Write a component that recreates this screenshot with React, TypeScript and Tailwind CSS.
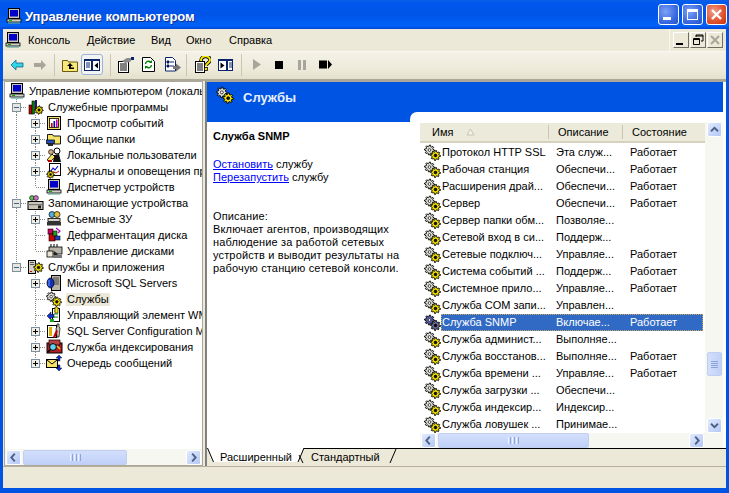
import React from "react";

const font = { fontFamily: '"Liberation Sans", Arial, sans-serif' };

function cogPoints(cx: number, cy: number, r: number, R: number, n: number) {
  const pts: string[] = [];
  for (let i = 0; i < n * 4; i++) {
    const a = (i / (n * 4)) * Math.PI * 2;
    const rad = i % 4 < 2 ? R : r;
    pts.push(`${(cx + Math.cos(a) * rad).toFixed(1)},${(cy + Math.sin(a) * rad).toFixed(1)}`);
  }
  return pts.join(" ");
}

function Cog({ cx, cy, R, fill, hole = "#fff" }: { cx: number; cy: number; R: number; fill: string; hole?: string }) {
  return (
    <g>
      <polygon points={cogPoints(cx, cy, R * 0.7, R, 8)} fill={fill} stroke="#000" strokeWidth="0.9" />
      <circle cx={cx} cy={cy} r={R * 0.28} fill={hole} stroke="#000" strokeWidth="0.7" />
    </g>
  );
}

function Gears({ selected = false, size = 17 }: { selected?: boolean; size?: number }) {
  return (
    <svg width={size} height={size} viewBox="0 0 17 17" className="shrink-0">
      <Cog cx={5.5} cy={6} R={5} fill={selected ? "#5a5fb0" : "#e4e2da"} />
      <Cog cx={11.5} cy={11.5} R={5} fill={selected ? "#6b6f9c" : "#f7e400"} hole="#111" />
    </svg>
  );
}

function Computer({ size = 16 }: { size?: number }) {
  return (
    <svg width={size} height={size} viewBox="0 0 16 16" className="shrink-0">
      <rect x="2.5" y="0.5" width="11" height="10" fill="#c8c4b8" stroke="#000" />
      <rect x="4" y="2" width="8" height="6.5" fill="#0000c8" />
      <rect x="1" y="11" width="14" height="3" fill="#d4d0c8" stroke="#000" strokeWidth="0.8" />
      <rect x="3" y="12" width="3" height="1" fill="#00b000" />
      <rect x="2" y="14.4" width="12" height="1.2" fill="#5fa89c" />
    </svg>
  );
}

type IconName =
  | "tools" | "event" | "folder" | "users" | "logs" | "device" | "storage" | "removable"
  | "defrag" | "disk" | "apps" | "sql" | "gears" | "wmi" | "sqlconf" | "index" | "queue";

function TreeIcon({ name }: { name: IconName }) {
  const c = "shrink-0";
  switch (name) {
    case "tools":
      return (
        <svg width="17" height="16" viewBox="0 0 17 16" className={c}>
          <rect x="2" y="6" width="3" height="9" fill="#c00000" stroke="#000" strokeWidth="0.6" />
          <rect x="5" y="2" width="2.5" height="13" fill="#008000" stroke="#000" strokeWidth="0.6" />
          <path d="M8 1l2 0 0 10-2 0z" fill="#1b1b6b" />
          <Cog cx={12} cy={11} R={4.2} fill="#f7e400" hole="#111" />
        </svg>
      );
    case "event":
      return (
        <svg width="16" height="16" viewBox="0 0 16 16" className={c}>
          <rect x="1.5" y="1.5" width="13" height="13" fill="#f4e070" stroke="#000" />
          <rect x="3.5" y="3.5" width="9" height="9" fill="#fff" stroke="#000" strokeWidth="0.8" />
          <rect x="5" y="8" width="1.6" height="4" fill="#d00000" />
          <rect x="7.5" y="6" width="1.6" height="6" fill="#0000c0" />
          <rect x="10" y="4.5" width="1.6" height="7.5" fill="#c000c0" />
        </svg>
      );
    case "folder":
      return (
        <svg width="16" height="16" viewBox="0 0 16 16" className={c}>
          <path d="M1.5 3.5h5l1 1.5h7v8h-13z" fill="#f6e46a" stroke="#000" strokeWidth="0.9" />
          <rect x="0.5" y="9" width="8" height="3.5" fill="#2050c0" stroke="#000" strokeWidth="0.7" />
          <rect x="2" y="12.5" width="5" height="2.5" fill="#2a2a2a" />
        </svg>
      );
    case "users":
      return (
        <svg width="16" height="16" viewBox="0 0 16 16" className={c}>
          <circle cx="11" cy="4" r="3" fill="#fff" stroke="#000" />
          <path d="M7 15l1-7 5-1 2 8z" fill="#111" />
          <path d="M1 13l5-6 3 3-5 5z" fill="#f6e46a" stroke="#000" strokeWidth="0.8" />
          <circle cx="5" cy="5" r="2.4" fill="#d8b080" stroke="#000" strokeWidth="0.7" />
          <rect x="2" y="13" width="4" height="2" fill="#c00000" />
        </svg>
      );
    case "logs":
      return (
        <svg width="16" height="16" viewBox="0 0 16 16" className={c}>
          <rect x="3.5" y="0.5" width="11" height="12" fill="#fff" stroke="#000" />
          <path d="M5 8l2-3 2 2 3-4" fill="none" stroke="#0000d0" strokeWidth="1.1" />
          <path d="M5 10l3-1 2 1 3-2" fill="none" stroke="#d00000" strokeWidth="1" />
          <Cog cx={4.5} cy={11.5} R={3.8} fill="#f7e400" hole="#111" />
        </svg>
      );
    case "device":
      return <Computer />;
    case "storage":
      return (
        <svg width="17" height="16" viewBox="0 0 17 16" className={c}>
          <circle cx="5" cy="3" r="2.4" fill="#60c060" stroke="#000" strokeWidth="0.6" />
          <circle cx="9" cy="3" r="2.4" fill="#d070c0" stroke="#000" strokeWidth="0.6" />
          <rect x="1" y="6.5" width="15" height="8" fill="#c8c4b8" stroke="#000" />
          <rect x="1" y="9" width="15" height="1.2" fill="#777" />
          <rect x="11" y="10.5" width="3" height="3" fill="#222" />
        </svg>
      );
    case "removable":
      return (
        <svg width="16" height="16" viewBox="0 0 16 16" className={c}>
          <circle cx="6" cy="3.5" r="3" fill="#50b0e0" stroke="#000" strokeWidth="0.7" />
          <circle cx="11" cy="3.5" r="3" fill="#e0c040" stroke="#000" strokeWidth="0.7" />
          <rect x="2" y="7.5" width="12" height="3" fill="#d4d0c8" stroke="#000" strokeWidth="0.8" />
          <rect x="1" y="11" width="14" height="3.5" fill="#333" />
        </svg>
      );
    case "defrag":
      return (
        <svg width="16" height="16" viewBox="0 0 16 16" className={c}>
          <rect x="2" y="2" width="5" height="5" fill="#d00060" stroke="#000" strokeWidth="0.6" />
          <rect x="3" y="7" width="6" height="7" fill="#d00000" stroke="#000" strokeWidth="0.6" />
          <rect x="7" y="4" width="4" height="5" fill="#20a020" stroke="#000" strokeWidth="0.6" />
          <path d="M10 1l4 3-2 2" fill="none" stroke="#b000c0" strokeWidth="1.2" />
          <rect x="9" y="9" width="5" height="4" fill="#2040c0" stroke="#000" strokeWidth="0.6" />
        </svg>
      );
    case "disk":
      return (
        <svg width="17" height="16" viewBox="0 0 17 16" className={c}>
          <rect x="3" y="4" width="13" height="7" fill="#b8b4a8" stroke="#000" strokeWidth="0.8" />
          <path d="M5 1v3M8 1v3M11 1v3" stroke="#000" />
          <rect x="1" y="8" width="6" height="6" fill="#e8e4d0" stroke="#000" strokeWidth="0.8" />
          <path d="M8 8l4 3-4 3z" fill="#222" />
          <rect x="7" y="12" width="9" height="3" fill="#777" />
        </svg>
      );
    case "apps":
      return (
        <svg width="17" height="16" viewBox="0 0 17 16" className={c}>
          <rect x="1.5" y="1.5" width="7" height="13" fill="#d4d0c8" stroke="#000" />
          <rect x="3" y="3" width="4" height="1" fill="#555" />
          <rect x="3" y="5" width="4" height="1" fill="#555" />
          <rect x="3" y="12" width="2" height="1" fill="#d00000" />
          <Cog cx={11.5} cy={8.5} R={4.8} fill="#f7e400" hole="#111" />
        </svg>
      );
    case "sql":
      return (
        <svg width="16" height="16" viewBox="0 0 16 16" className={c}>
          <rect x="5.5" y="0.5" width="9" height="15" fill="#b8b4a8" stroke="#000" />
          <path d="M7 3h6M7 5h6M7 7h6M7 9h6" stroke="#444" />
          <ellipse cx="4.5" cy="8" rx="3.5" ry="5" fill="#1030c0" stroke="#000" strokeWidth="0.7" />
          <path d="M3 5v6" stroke="#70a0ff" />
        </svg>
      );
    case "gears":
      return <Gears size={16} />;
    case "wmi":
      return (
        <svg width="16" height="16" viewBox="0 0 16 16" className={c}>
          <rect x="6.5" y="1.5" width="7" height="13" fill="#fff" stroke="#000" />
          <path d="M8 4h4M8 7h4M8 10h4" stroke="#008000" />
          <path d="M1 9l4-4 0 2.5 3 0 0 3-3 0 0 2.5z" fill="#1030d0" stroke="#000" strokeWidth="0.5" />
          <rect x="9" y="0" width="3" height="6" fill="#f7e400" stroke="#000" strokeWidth="0.5" />
          <rect x="4" y="12" width="4" height="3" fill="#20a020" />
        </svg>
      );
    case "sqlconf":
      return (
        <svg width="16" height="16" viewBox="0 0 16 16" className={c}>
          <rect x="1.5" y="2.5" width="9" height="12" fill="#fff" stroke="#000" />
          <rect x="3" y="4" width="3" height="9" fill="#e0b000" />
          <path d="M11 1l2 0 0 3 1 1-1 9-2 0-1-9 1-1z" fill="#c8c4b8" stroke="#000" strokeWidth="0.7" />
          <path d="M7 14l3-7 2 1-3 7z" fill="#c00000" />
        </svg>
      );
    case "index":
      return (
        <svg width="17" height="16" viewBox="0 0 17 16" className={c}>
          <rect x="1" y="4" width="15" height="10" fill="#b02020" stroke="#000" />
          <rect x="3" y="1" width="11" height="5" fill="#c04040" stroke="#000" strokeWidth="0.7" />
          <circle cx="7" cy="8" r="3.4" fill="#60d0f0" stroke="#000" />
          <path d="M4.5 10.5l-3 3" stroke="#000" strokeWidth="1.6" />
          <path d="M11 7l3 3" stroke="#f0d040" strokeWidth="1.4" />
        </svg>
      );
    case "queue":
      return (
        <svg width="17" height="16" viewBox="0 0 17 16" className={c}>
          <rect x="0.5" y="4.5" width="11" height="8" fill="#f6e46a" stroke="#000" />
          <path d="M1 5l5 4 5-4" fill="none" stroke="#000" />
          <path d="M13 0l3 3-2 0 0 3-2 0 0-3-2 0z" fill="#1030d0" stroke="#000" strokeWidth="0.4" />
          <path d="M13 16l3-3-2 0 0-3-2 0 0 3-2 0z" fill="#1030d0" stroke="#000" strokeWidth="0.4" />
        </svg>
      );
  }
}

function Guide({ v = false, vEnd = false, h = false }: { v?: boolean; vEnd?: boolean; h?: boolean }) {
  return (
    <svg width="19" height="16" viewBox="0 0 19 16" className="shrink-0">
      {v && <line x1="9.5" y1="0" x2="9.5" y2="16" stroke="#8a8a80" strokeDasharray="1 1" />}
      {vEnd && <line x1="9.5" y1="0" x2="9.5" y2="8" stroke="#8a8a80" strokeDasharray="1 1" />}
      {h && <line x1="10" y1="8.5" x2="19" y2="8.5" stroke="#8a8a80" strokeDasharray="1 1" />}
    </svg>
  );
}

function Expander({ open, v = true, top = true }: { open: boolean; v?: boolean; top?: boolean }) {
  return (
    <svg width="19" height="16" viewBox="0 0 19 16" className="shrink-0">
      {top && <line x1="9.5" y1="0" x2="9.5" y2="4" stroke="#8a8a80" strokeDasharray="1 1" />}
      {v && <line x1="9.5" y1="13" x2="9.5" y2="16" stroke="#8a8a80" strokeDasharray="1 1" />}
      <line x1="14" y1="8.5" x2="19" y2="8.5" stroke="#8a8a80" strokeDasharray="1 1" />
      <rect x="5.5" y="4.5" width="8" height="8" fill={open ? "#e6e6dc" : "#efefe6"} stroke="#7f8f9f" />
      <line x1="7" y1="8.5" x2="12" y2="8.5" stroke={open ? "#4060a0" : "#000"} />
      {!open && <line x1="9.5" y1="6" x2="9.5" y2="11" stroke="#000" />}
    </svg>
  );
}

type Node = { label: string; icon: IconName; level: 1 | 2; exp?: "open" | "closed"; last?: boolean; sel?: boolean; tail?: boolean };

const nodes: Node[] = [
  { label: "Служебные программы", icon: "tools", level: 1, exp: "open" },
  { label: "Просмотр событий", icon: "event", level: 2, exp: "closed" },
  { label: "Общие папки", icon: "folder", level: 2, exp: "closed" },
  { label: "Локальные пользователи", icon: "users", level: 2, exp: "closed" },
  { label: "Журналы и оповещения производительности", icon: "logs", level: 2, exp: "closed" },
  { label: "Диспетчер устройств", icon: "device", level: 2, last: true },
  { label: "Запоминающие устройства", icon: "storage", level: 1, exp: "open" },
  { label: "Съемные ЗУ", icon: "removable", level: 2, exp: "closed" },
  { label: "Дефрагментация диска", icon: "defrag", level: 2 },
  { label: "Управление дисками", icon: "disk", level: 2, last: true },
  { label: "Службы и приложения", icon: "apps", level: 1, exp: "open", last: true },
  { label: "Microsoft SQL Servers", icon: "sql", level: 2, exp: "closed", tail: true },
  { label: "Службы", icon: "gears", level: 2, sel: true, tail: true },
  { label: "Управляющий элемент WMI", icon: "wmi", level: 2, tail: true },
  { label: "SQL Server Configuration Manager", icon: "sqlconf", level: 2, exp: "closed", tail: true },
  { label: "Служба индексирования", icon: "index", level: 2, exp: "closed", tail: true },
  { label: "Очередь сообщений", icon: "queue", level: 2, exp: "closed", last: true, tail: true },
];

function TreeRow({ n }: { n: Node }) {
  return (
    <div className="flex h-[16px] items-center whitespace-nowrap pl-[2px]">
      {n.level === 1 ? (
        <Expander open v={!n.last} />
      ) : (
        <>
          {n.tail ? <Guide /> : <Guide v />}
          {n.exp ? <Expander open={false} v={!n.last} /> : n.last ? <Guide vEnd h /> : <Guide v h />}
        </>
      )}
      <span className="ml-[1px] flex w-[20px] shrink-0">
        <TreeIcon name={n.icon} />
      </span>
      <span className={`px-[1px] ${n.sel ? "bg-[#ece9d8]" : ""}`}>{n.label}</span>
    </div>
  );
}

function XArrow({ dir }: { dir: "l" | "r" | "u" | "d" }) {
  const d = { l: "M9 3L5 7.5 9 12", r: "M6 3l4 4.5L6 12", u: "M3.5 9.5L7.5 5.5 11.5 9.5", d: "M3.5 5.5L7.5 9.5 11.5 5.5" }[dir];
  return (
    <svg width="15" height="15" viewBox="0 0 15 15">
      <path d={d} fill="none" stroke="#4d6185" strokeWidth="2.2" />
    </svg>
  );
}

function SBtn({ dir }: { dir: "l" | "r" | "u" | "d" }) {
  return (
    <div className="flex h-[15px] w-[15px] shrink-0 items-center justify-center rounded-[2px] border border-white bg-[linear-gradient(135deg,#e1eafe,#b4c8f6)]">
      <XArrow dir={dir} />
    </div>
  );
}

function HScroll({ thumb, className }: { thumb: number; className?: string }) {
  return (
    <div className={`flex items-center justify-between bg-[#f7f7f2] px-[1px] ${className ?? ""}`}>
      <div className="flex min-w-0 flex-1 items-center">
        <SBtn dir="l" />
        <div
          style={{ width: thumb }}
          className="ml-[2px] flex h-[15px] items-center justify-center gap-[1px] rounded-[2px] border border-[#c0cef0] bg-[linear-gradient(180deg,#d3dffb,#c0d0f8)]"
        >
          <span className="h-[7px] w-[1px] bg-[#eef4fe]" />
          <span className="h-[7px] w-[1px] bg-[#8da4d8]" />
          <span className="h-[7px] w-[1px] bg-[#eef4fe]" />
          <span className="h-[7px] w-[1px] bg-[#8da4d8]" />
          <span className="h-[7px] w-[1px] bg-[#eef4fe]" />
          <span className="h-[7px] w-[1px] bg-[#8da4d8]" />
        </div>
      </div>
      <SBtn dir="r" />
    </div>
  );
}

const services: [string, string, string][] = [
  ["Протокол HTTP SSL", "Эта служ...", "Работает"],
  ["Рабочая станция", "Обеспечи...", "Работает"],
  ["Расширения драй...", "Обеспечи...", "Работает"],
  ["Сервер", "Обеспечи...", "Работает"],
  ["Сервер папки обм...", "Позволяе...", ""],
  ["Сетевой вход в си...", "Поддерж...", ""],
  ["Сетевые подключ...", "Управляе...", "Работает"],
  ["Система событий ...", "Поддерж...", "Работает"],
  ["Системное прило...", "Управляе...", "Работает"],
  ["Служба COM запи...", "Управлен...", ""],
  ["Служба SNMP", "Включае...", "Работает"],
  ["Служба админист...", "Выполняе...", ""],
  ["Служба восстанов...", "Выполняе...", "Работает"],
  ["Служба времени ...", "Управляе...", "Работает"],
  ["Служба загрузки ...", "Обеспечи...", ""],
  ["Служба индексир...", "Индексир...", ""],
  ["Служба ловушек ...", "Принимае...", ""],
];

function ServiceRow({ r }: { r: [string, string, string] }) {
  const sel = r[0] === "Служба SNMP";
  return (
    <div className="flex h-[17px] items-center pl-[4px] whitespace-nowrap">
      <span className="flex w-[17px] shrink-0">
        <Gears selected={sel} />
      </span>
      <div
        className={`flex h-[17px] flex-1 items-center border ${sel ? "border-dotted border-[#c9a860] bg-[#316ac5] text-white" : "border-transparent"}`}
      >
        <span className="w-[114px] shrink-0">{r[0]}</span>
        <span className="w-[74px] shrink-0">{r[1]}</span>
        <span>{r[2]}</span>
      </div>
    </div>
  );
}

function ToolSep() {
  return <span className="block h-[22px] w-[1px] shrink-0 bg-[#c9c6b4]" />;
}

function TitleButton({ kind }: { kind: "min" | "max" | "close" }) {
  const bg =
    kind === "close"
      ? "bg-[radial-gradient(circle_at_35%_35%,#f0a08a,#e0502c_60%,#c2350f)]"
      : "bg-[radial-gradient(circle_at_35%_35%,#7fa2f5,#3a6ae0_60%,#2250cc)]";
  return (
    <div className={`flex h-[21px] w-[21px] items-center justify-center rounded-[3px] border border-white ${bg}`}>
      <svg width="19" height="19" viewBox="0 0 19 19">
        {kind === "min" && <rect x="4" y="12" width="8" height="3" fill="#fff" />}
        {kind === "max" && (
          <path d="M4 4h11v11H4z M5 7v7h9V7z" fill="#fff" fillRule="evenodd" />
        )}
        {kind === "close" && <path d="M5 5l9 9M14 5l-9 9" stroke="#fff" strokeWidth="2.4" />}
      </svg>
    </div>
  );
}

function MdiButton({ kind }: { kind: "min" | "restore" | "close" }) {
  return (
    <div className="flex h-[16px] w-[16px] items-center justify-center border border-t-white border-l-white border-r-[#716f64] border-b-[#716f64] bg-[#ece9d8]">
      <svg width="14" height="14" viewBox="0 0 14 14">
        {kind === "min" && <rect x="2" y="10" width="7" height="2" fill="#000" />}
        {kind === "restore" && (
          <path d="M5 2h7v6h-2M5 2v2M5 3h7M2.5 5.5h6v6h-6zM2 6.5h7" fill="none" stroke="#000" />
        )}
        {kind === "close" && <path d="M3 3l8 8M11 3l-8 8" stroke="#a8a69a" strokeWidth="2" />}
      </svg>
    </div>
  );
}

export default function App() {
  return (
    <div style={font} className="flex h-[493px] w-[729px] flex-col overflow-hidden bg-[#0054e3] text-[11px] leading-[13px] text-black">
      {/* title */}
      <div className="flex h-[29px] shrink-0 items-center bg-[linear-gradient(180deg,#0a5fe6_0%,#0058ee_10%,#0054e8_50%,#0062f8_88%,#0048d8_100%)] pl-[6px] pr-[2px]">
        <span className="mt-[2px] flex">
          <Computer size={16} />
        </span>
        <span className="ml-[3px] mt-[4px] flex-1 text-[13px] font-bold text-white [text-shadow:1px_1px_0_#0f2f90]">
          Управление компьютером
        </span>
        <div className="flex gap-[3px]">
          <TitleButton kind="min" />
          <TitleButton kind="max" />
          <TitleButton kind="close" />
        </div>
      </div>

      <div className="mx-[3px] mb-[5px] flex min-h-0 flex-1 flex-col bg-[#ece9d8]">
        {/* menu */}
        <div className="flex h-[23px] shrink-0 items-center border-b border-[#f8f7f0] pl-[2px]">
          <Computer size={16} />
          <div className="ml-[7px] flex">
            <span className="w-[59px]">Консоль</span>
            <span className="w-[64px]">Действие</span>
            <span className="w-[35px]">Вид</span>
            <span className="w-[43px]">Окно</span>
            <span>Справка</span>
          </div>
          <div className="ml-auto flex h-full items-center gap-[1px] border-l border-[#f8f7f0] pl-[3px] pr-[3px]">
            <MdiButton kind="min" />
            <MdiButton kind="restore" />
            <MdiButton kind="close" />
          </div>
        </div>

        {/* toolbar */}
        <div className="flex h-[29px] shrink-0 items-center border-b-2 border-[#aca899] bg-[linear-gradient(180deg,#f4f2e8,#ece9d8_70%,#e3e0cc)] pb-[2px] pl-[7px]">
          <svg width="14" height="12" viewBox="0 0 14 12" className="shrink-0">
            <path d="M1 6l5-5v3h7v4H6v3z" fill="#2fd6e6" stroke="#1a5f8a" strokeWidth="0.8" />
          </svg>
          <svg width="14" height="12" viewBox="0 0 14 12" className="ml-[9px] mr-[7px] shrink-0">
            <path d="M13 6L8 1v3H1v4h7v3z" fill="#a8a69a" />
          </svg>
          <ToolSep />
          <svg width="16" height="14" viewBox="0 0 16 14" className="ml-[7px] shrink-0">
            <path d="M0.5 2.5h5l1 1.5h9v9.5H0.5z" fill="#f6e87a" stroke="#6b5a10" />
            <path d="M8 5L5 8h2v3h5V9.5H9V8h2z" fill="#000" />
          </svg>
          <div className="ml-[3px] flex h-[21px] w-[22px] shrink-0 items-center justify-center rounded-[3px] border border-[#9db1d6] bg-[#f2f3f3]">
            <svg width="16" height="12" viewBox="0 0 16 12">
              <rect x="0.5" y="0.5" width="15" height="11" fill="#fff" stroke="#0a246a" />
              <rect x="0" y="0" width="16" height="2" fill="#0a246a" />
              <rect x="7" y="0" width="2" height="12" fill="#0a246a" />
              <path d="M2 4h4M2 6h4M2 8h4" stroke="#0a246a" />
              <path d="M14 3.5L10.5 6.5 14 9.5z" fill="#000" />
            </svg>
          </div>
          <span className="ml-[7px] flex">
            <ToolSep />
          </span>
          <svg width="17" height="16" viewBox="0 0 17 16" className="ml-[6px] shrink-0">
            <rect x="1.5" y="4.5" width="10" height="11" fill="#fff" stroke="#000" />
            <path d="M3 7h7M3 9h7M3 11h7M3 13h7" stroke="#000" />
            <path d="M5 4l5-3 6 0-3 4-5 1z" fill="#8a8a8a" />
            <rect x="14" y="0" width="3" height="3" fill="#0a246a" />
          </svg>
          <svg width="13" height="15" viewBox="0 0 13 15" className="ml-[8px] shrink-0">
            <path d="M0.5 0.5h8l4 4v10H0.5z" fill="#fff" stroke="#000" />
            <path d="M3.5 7a3 3 0 0 1 5-2M9.5 8a3 3 0 0 1-5 2" fill="none" stroke="#008000" strokeWidth="1.4" />
            <path d="M7 6h3V3zM6 9H3v3z" fill="#008000" />
          </svg>
          <svg width="16" height="15" viewBox="0 0 16 15" className="ml-[10px] shrink-0">
            <path d="M0.5 0.5h7l3 3v10.5H0.5z" fill="#fff" stroke="#0a246a" />
            <path d="M2 4h2v2H2zM2 8h2v2H2zM5 5h4M5 9h4" stroke="#0a246a" />
            <path d="M8 9h3V6.5l5 4-5 4V12H8z" fill="#777" />
          </svg>
          <span className="ml-[5px] flex">
            <ToolSep />
          </span>
          <svg width="16" height="17" viewBox="0 0 16 17" className="ml-[8px] shrink-0">
            <rect x="0.5" y="5.5" width="9" height="11" fill="#fff" stroke="#000" />
            <path d="M2 8h6M2 10h6M2 12h6M2 14h6" stroke="#000" />
            <path d="M6 5c0-6 9-6 9-1 0 3-4 3-4 6" fill="none" stroke="#000" strokeWidth="3.6" />
            <path d="M6 5c0-6 9-6 9-1 0 3-4 3-4 6" fill="none" stroke="#f6e800" strokeWidth="2" />
            <rect x="9.5" y="11.5" width="3" height="3" fill="#f6e800" stroke="#000" strokeWidth="0.8" />
          </svg>
          <svg width="15" height="12" viewBox="0 0 15 12" className="ml-[7px] shrink-0">
            <rect x="0.5" y="0.5" width="14" height="11" fill="#fff" stroke="#0a246a" />
            <rect x="0" y="0" width="15" height="2" fill="#0a246a" />
            <rect x="8" y="0" width="2" height="12" fill="#0a246a" />
            <path d="M11 4h3M11 6h3M11 8h3" stroke="#0a246a" />
            <path d="M2.5 3.5L6.5 6.5 2.5 9.5z" fill="#000" />
          </svg>
          <span className="ml-[8px] flex">
            <ToolSep />
          </span>
          <svg width="8" height="11" viewBox="0 0 8 11" className="ml-[11px] shrink-0">
            <path d="M0 0l8 5.5L0 11z" fill="#a8a69a" />
          </svg>
          <span className="ml-[14px] h-[8px] w-[8px] shrink-0 bg-black" />
          <svg width="8" height="10" viewBox="0 0 8 10" className="ml-[15px] shrink-0">
            <rect x="0" y="0" width="3" height="10" fill="#a8a69a" />
            <rect x="5" y="0" width="3" height="10" fill="#a8a69a" />
          </svg>
          <svg width="13" height="9" viewBox="0 0 13 9" className="ml-[13px] shrink-0">
            <rect x="0" y="0.5" width="8" height="8" fill="#000" />
            <path d="M9 0l4 4.5L9 9z" fill="#000" />
          </svg>
        </div>

        {/* main */}
        <div className="flex min-h-0 flex-1 pl-[1px]">
          {/* left pane */}
          <div className="flex w-[199px] shrink-0 flex-col border border-[#aca899] bg-white">
            <div className="min-h-0 flex-1 overflow-hidden pt-[1px]">
              <div className="flex h-[16px] items-center whitespace-nowrap pl-[4px]">
                <span className="flex w-[20px] shrink-0">
                  <Computer />
                </span>
                <span>Управление компьютером (локальный)</span>
              </div>
              {nodes.map((n) => (
                <TreeRow key={n.label} n={n} />
              ))}
            </div>
            <HScroll thumb={104} className="h-[16px] shrink-0" />
          </div>

          {/* right pane */}
          <div className="ml-[2px] flex min-w-0 flex-1 flex-col border-l-2 border-t border-l-[#808080] border-t-[#aca899]">
            <div className="flex min-h-0 flex-1 border-b border-black bg-white">
              {/* details */}
              <div className="flex w-[203px] shrink-0 flex-col">
                <div className="flex h-[40px] shrink-0 items-start bg-[#0054e3] pl-[9px] pt-[4px]">
                  <Gears size={18} />
                  <span className="ml-[9px] mt-[5px] text-[13px] font-bold text-[#e8efff]">Службы</span>
                </div>
                <div className="pl-[6px] pt-[8px]">
                  <p className="font-bold">Служба SNMP</p>
                  <p className="mt-[15px]">
                    <span className="text-[#0000ff] underline">Остановить</span> службу
                  </p>
                  <p>
                    <span className="text-[#0000ff] underline">Перезапустить</span> службу
                  </p>
                  <p className="mt-[26px] whitespace-nowrap tracking-[0.15px]">
                    Описание:
                    <br />
                    Включает агентов, производящих
                    <br />
                    наблюдение за работой сетевых
                    <br />
                    устройств и выводит результаты на
                    <br />
                    рабочую станцию сетевой консоли.
                  </p>
                </div>
              </div>

              {/* list side */}
              <div className="flex min-w-0 flex-1 flex-col">
                <div className="mr-[3px] h-[40px] shrink-0 bg-[#0054e3] pt-[30px]">
                  <div className="h-[10px] rounded-tl-[7px] bg-white" />
                </div>
                <div className="flex min-h-0 flex-1 pl-[10px]">
                  <div className="flex min-w-0 flex-1 flex-col">
                    <div className="flex min-h-0 flex-1">
                      <div className="flex w-[285px] flex-col overflow-hidden">
                        <div className="mt-[1px] flex h-[20px] shrink-0 items-center border-b-2 border-[#d6d2bd] bg-[#ebeadb]">
                          <span className="flex h-[14px] w-[129px] items-center border-r border-[#c9c6b4] pl-[12px]">
                            Имя
                            <svg width="9" height="8" viewBox="0 0 9 8" className="ml-[13px]">
                              <path d="M4.5 1L8 7H1z" fill="#f4f3ea" stroke="#c8c5b2" />
                            </svg>
                          </span>
                          <span className="flex h-[14px] w-[74px] items-center border-r border-[#c9c6b4] pl-[9px]">Описание</span>
                          <span className="pl-[9px]">Состояние</span>
                        </div>
                        <div className="min-h-0 flex-1 overflow-hidden bg-white pr-[2px] pt-[1px]">
                          {services.map((r) => (
                            <ServiceRow key={r[0]} r={r} />
                          ))}
                          <div className="pl-[4px]">
                            <Gears />
                          </div>
                        </div>
                        <HScroll thumb={151} className="h-[15px] shrink-0" />
                      </div>
                      {/* vertical scrollbar */}
                      <div className="flex w-[18px] shrink-0 flex-col items-center bg-[#f7f7f2] pb-[15px]">
                        <SBtn dir="u" />
                        <div className="flex min-h-0 flex-1 flex-col justify-end pb-[42px]">
                          <div className="flex h-[24px] w-[15px] flex-col items-center justify-center gap-[1px] rounded-[2px] border border-[#c0cef0] bg-[linear-gradient(90deg,#d3dffb,#c0d0f8)]">
                            <span className="h-[1px] w-[7px] bg-[#8da4d8]" />
                            <span className="h-[1px] w-[7px] bg-[#8da4d8]" />
                            <span className="h-[1px] w-[7px] bg-[#8da4d8]" />
                            <span className="h-[1px] w-[7px] bg-[#8da4d8]" />
                          </div>
                        </div>
                        <SBtn dir="d" />
                      </div>
                    </div>
                  </div>
                </div>
              </div>
            </div>

            {/* tabs */}
            <div className="flex h-[17px] shrink-0 items-start bg-[#ece9d8]">
              <div className="relative -mt-[1px] h-[15px] w-[98px] shrink-0">
                <svg width="98" height="15" viewBox="0 0 98 15" className="absolute left-0 top-0">
                  <path d="M0 0H97L91 14H6z" fill="#fff" />
                  <path d="M0.5 0L6.5 14M97 0L91 14M92 7L96 15" stroke="#000" fill="none" />
                </svg>
                <span className="absolute left-[13px] top-[3px]">Расширенный</span>
              </div>
              <div className="relative h-[15px] w-[94px] shrink-0">
                <svg width="94" height="15" viewBox="0 0 94 15" className="absolute left-0 top-0">
                  <path d="M91 0L85 14" stroke="#000" fill="none" />
                </svg>
                <span className="absolute left-[6px] top-[2px]">Стандартный</span>
              </div>
            </div>
          </div>
        </div>

        {/* status */}
        <div className="h-[22px] shrink-0 border-t border-[#b5b19e] bg-[#ece9d8]" />
      </div>
    </div>
  );
}
